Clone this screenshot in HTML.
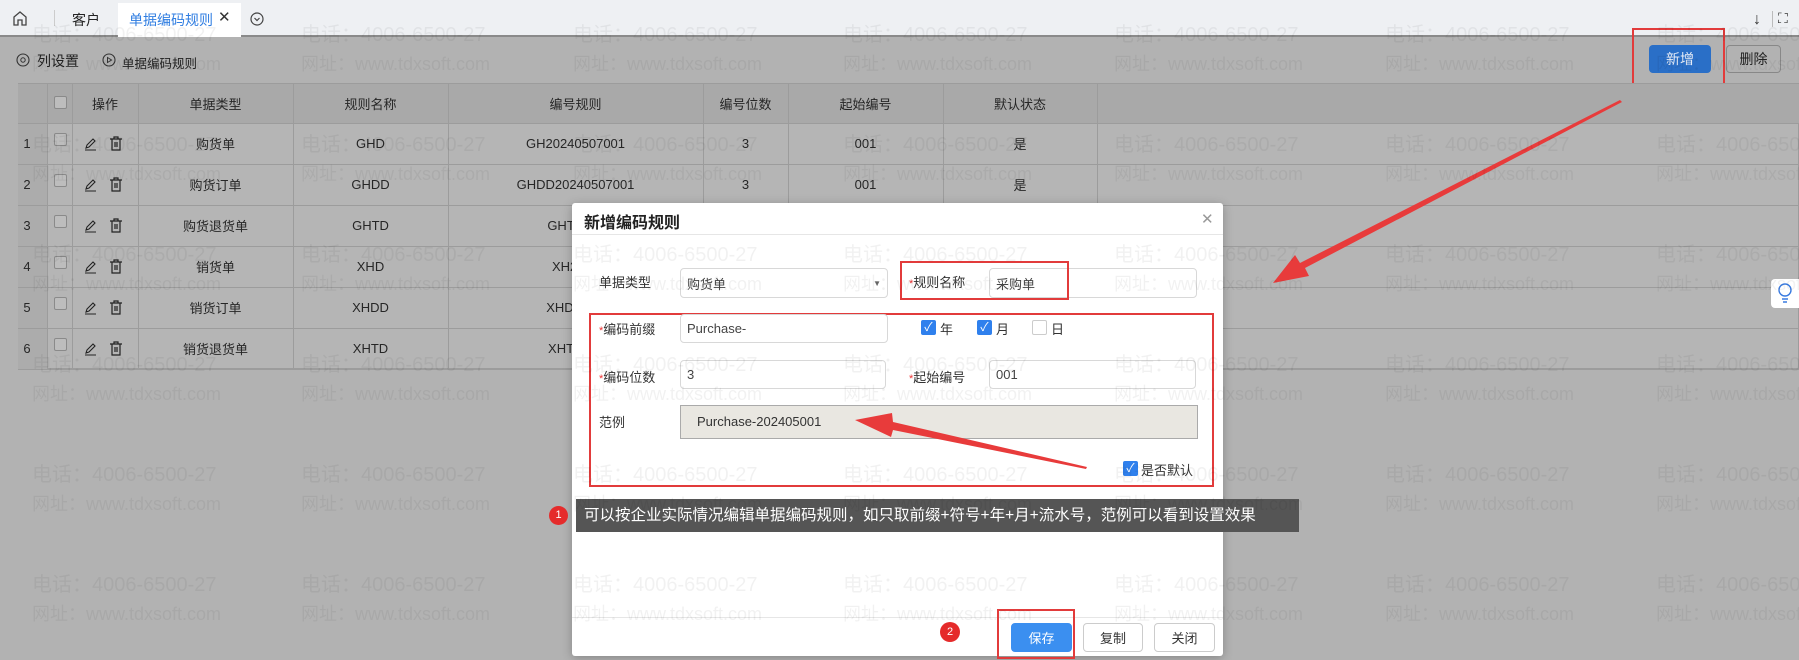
<!DOCTYPE html>
<html><head><meta charset="utf-8"><style>
*{box-sizing:border-box;margin:0;padding:0}
body{width:1799px;height:660px;overflow:hidden;position:relative;background:#b2b2b2;font-family:"Liberation Sans","Noto Sans CJK SC",sans-serif;font-size:13px;color:#222}
.a{position:absolute}
.tabbar{left:0;top:0;width:1799px;height:37px;background:#eef0f3;border-bottom:2px solid #8a8a8a}
.th{background:#a9a9a9}
.cell{position:absolute;display:flex;align-items:center;justify-content:center;font-size:13px;color:#262626}
.vl{position:absolute;width:1px;background:#9c9c9c}
.hl{position:absolute;height:1px;background:#9c9c9c;left:18px;width:1781px}
.cb{position:absolute;width:13px;height:13px;border:1px solid #8a8a8a;border-radius:2px;background:#bdbdbd}
.dlg{left:572px;top:203px;width:651px;height:453px;background:#fff;border-radius:3px;box-shadow:0 2px 10px rgba(0,0,0,.25)}
.lbl{position:absolute;font-size:13px;color:#333}
.req{color:#e33;font-size:11px}
.inp{position:absolute;border:1px solid #d8d8d8;border-radius:4px;background:#fff;font-size:13px;color:#444;padding-left:6px;display:flex;align-items:center}
.rbox{position:absolute;border:2px solid #e23b3b}
.ck{position:absolute;width:15px;height:15px;border-radius:2px;background:#2f80ed;color:#fff;font-size:12px;line-height:15px;text-align:center}
.btn{position:absolute;border:1px solid #ccc;border-radius:4px;background:#fff;display:flex;align-items:center;justify-content:center;font-size:13px;color:#333}
.wm{position:absolute;font-size:20px;color:rgba(0,0,0,.055);white-space:nowrap;z-index:50;pointer-events:none}
</style></head><body>

<div class="a tabbar"></div>
<svg class="a" style="left:12px;top:10px" width="16" height="17" viewBox="0 0 16 17"><path d="M2 7 L8 2 L14 7 V15 H10 V10 H6 V15 H2 Z" fill="none" stroke="#444" stroke-width="1.3"/></svg>
<div class="a" style="left:54px;top:10px;width:1px;height:16px;background:#ccc"></div>
<div class="a" style="left:72px;top:10px;font-size:14px;color:#222">客户</div>
<div class="a" style="left:118px;top:3px;width:123px;height:34px;background:#fff"></div>
<div class="a" style="left:129px;top:10px;font-size:14px;color:#2f7de1">单据编码规则</div>
<div class="a" style="left:218px;top:8px;font-size:15px;color:#333">✕</div>
<svg class="a" style="left:250px;top:12px" width="14" height="14"><circle cx="7" cy="7" r="6" fill="none" stroke="#444" stroke-width="1.2"/><path d="M4.5 6 L7 8.5 L9.5 6" fill="none" stroke="#444" stroke-width="1.2"/></svg>
<div class="a" style="left:1753px;top:11px;font-size:16px;color:#333">↓</div>
<div class="a" style="left:1772px;top:11px;width:1px;height:16px;background:#bbb"></div>
<div class="a" style="left:1778px;top:10px;font-size:14px;color:#333">⛶</div>

<svg class="a" style="left:16px;top:53px" width="14" height="14"><circle cx="7" cy="7" r="6" fill="none" stroke="#333" stroke-width="1.1"/><circle cx="7" cy="7" r="2.2" fill="none" stroke="#333"/></svg>
<div class="a" style="left:37px;top:51px;font-size:14px;color:#222">列设置</div>
<svg class="a" style="left:102px;top:53px" width="14" height="14"><circle cx="7" cy="7" r="6" fill="none" stroke="#333" stroke-width="1.1"/><path d="M5.5 4.5 L9.5 7 L5.5 9.5Z" fill="none" stroke="#333"/></svg>
<div class="a" style="left:122px;top:53px;font-size:12.5px;color:#222">单据编码规则</div>
<div class="a" style="left:1649px;top:45px;width:62px;height:28px;background:#2a6fc7;border-radius:4px;color:#e8eef8;font-size:14px;display:flex;align-items:center;justify-content:center">新增</div>
<div class="a" style="left:1726px;top:45px;width:55px;height:28px;border:1px solid #888;border-radius:4px;color:#222;font-size:14px;display:flex;align-items:center;justify-content:center">删除</div>
<div class="rbox" style="left:1632px;top:28px;width:93px;height:65px"></div>

<div class="a" style="left:18px;top:83px;width:1781px;height:286px;background:#b5b5b5;border:1px solid #9c9c9c"></div>
<div class="a th" style="left:18px;top:83px;width:1781px;height:40px;border-top:1px solid #9c9c9c"></div>
<div class="a" style="left:18px;top:123px;width:29px;height:246px;background:#acacac"></div>
<div class="hl" style="top:123px"></div><div class="hl" style="top:164px"></div><div class="hl" style="top:205px"></div><div class="hl" style="top:246px"></div><div class="hl" style="top:287px"></div><div class="hl" style="top:328px"></div><div class="hl" style="top:369px"></div>
<div class="vl" style="left:47px;top:83px;height:286px"></div>
<div class="vl" style="left:72px;top:83px;height:286px"></div>
<div class="vl" style="left:138px;top:83px;height:286px"></div>
<div class="vl" style="left:293px;top:83px;height:286px"></div>
<div class="vl" style="left:448px;top:83px;height:286px"></div>
<div class="vl" style="left:703px;top:83px;height:286px"></div>
<div class="vl" style="left:788px;top:83px;height:286px"></div>
<div class="vl" style="left:943px;top:83px;height:286px"></div>
<div class="vl" style="left:1097px;top:83px;height:286px"></div>
<div class="cb" style="left:54px;top:96px"></div>
<div class="cell" style="left:72px;top:83px;width:66px;height:40px">操作</div>
<div class="cell" style="left:138px;top:83px;width:155px;height:40px">单据类型</div>
<div class="cell" style="left:293px;top:83px;width:155px;height:40px">规则名称</div>
<div class="cell" style="left:448px;top:83px;width:255px;height:40px">编号规则</div>
<div class="cell" style="left:703px;top:83px;width:85px;height:40px">编号位数</div>
<div class="cell" style="left:788px;top:83px;width:155px;height:40px">起始编号</div>
<div class="cell" style="left:943px;top:83px;width:154px;height:40px">默认状态</div>

<div id="rows"></div>
<script>
var d=[["购货单","GHD","GH20240507001","3","001","是"],["购货订单","GHDD","GHDD20240507001","3","001","是"],["购货退货单","GHTD","GHT2024","","",""],["销货单","XHD","XH2024","","",""],["销货订单","XHDD","XHDD202","","",""],["销货退货单","XHTD","XHT2024","","",""]];
var h="";
for(var i=0;i<6;i++){var t=123+i*41;
h+='<div class="cell" style="left:18px;top:'+t+'px;width:18px;height:41px">'+(i+1)+'</div>';
h+='<div class="cb" style="left:54px;top:'+(t+10)+'px"></div>';
h+='<svg class="a" style="left:84px;top:'+(t+14)+'px" width="14" height="14"><path d="M2 11 L3 8 L9 2 L11 4 L5 10 Z" fill="none" stroke="#222" stroke-width="1.1"/><path d="M1 13 H12" stroke="#222"/></svg>';
h+='<svg class="a" style="left:109px;top:'+(t+13)+'px" width="14" height="16"><path d="M1 3 H13 M5 3 V1 H9 V3 M3 3 V14 H11 V3 M6 6 V11 M8 6 V11" fill="none" stroke="#222" stroke-width="1.2"/></svg>';
var xs=[[138,155],[293,155],[448,255],[703,85],[788,155],[943,154]];
for(var j=0;j<6;j++){h+='<div class="cell" style="left:'+xs[j][0]+'px;top:'+t+'px;width:'+xs[j][1]+'px;height:41px">'+d[i][j]+'</div>';}
}
document.getElementById("rows").innerHTML=h;
</script>

<div class="a" style="left:1771px;top:279px;width:28px;height:29px;background:#fff;border-radius:4px 0 0 4px"></div>
<svg class="a" style="left:1777px;top:283px" width="16" height="20"><circle cx="8" cy="7" r="6" fill="none" stroke="#3a7be0" stroke-width="1.4"/><path d="M5 16 H11 M6 19 H10" stroke="#3a7be0" stroke-width="1.4"/></svg>

<svg class="a" style="left:0;top:0;z-index:40" width="1799" height="660">
<polygon points="1620,100 1622,102 1305,268 1309,276 1273,283 1295,255 1300,263" fill="#e83b3b"/>
<polygon points="1087,467 1086,469 893,430 891,437 855,420 892,413 893,422" fill="#e83b3b"/>
</svg>

<div class="a dlg"></div>
<div class="a" style="left:584px;top:209px;font-size:16px;font-weight:bold;color:#222">新增编码规则</div>
<div class="a" style="left:1201px;top:210px;font-size:15px;color:#999">✕</div>
<div class="a" style="left:572px;top:234px;width:651px;height:1px;background:#e6e6e6"></div>

<div class="lbl" style="left:599px;top:272px">单据类型</div>
<div class="inp" style="left:680px;top:268px;width:208px;height:30px">购货单<span style="position:absolute;right:6px;font-size:8px;color:#666">▼</span></div>
<div class="lbl" style="left:909px;top:272px"><span class="req">*</span>规则名称</div>
<div class="inp" style="left:989px;top:268px;width:208px;height:30px">采购单</div>
<div class="rbox" style="left:900px;top:261px;width:169px;height:39px"></div>

<div class="rbox" style="left:589px;top:313px;width:625px;height:174px"></div>
<div class="lbl" style="left:599px;top:319px"><span class="req">*</span>编码前缀</div>
<div class="inp" style="left:680px;top:314px;width:208px;height:29px">Purchase-</div>
<div class="ck" style="left:921px;top:320px">✓</div><div class="lbl" style="left:940px;top:319px">年</div>
<div class="ck" style="left:977px;top:320px">✓</div><div class="lbl" style="left:996px;top:319px">月</div>
<div class="a" style="left:1032px;top:320px;width:15px;height:15px;border:1px solid #ccc;border-radius:2px"></div><div class="lbl" style="left:1051px;top:319px">日</div>

<div class="lbl" style="left:599px;top:367px"><span class="req">*</span>编码位数</div>
<div class="inp" style="left:680px;top:360px;width:206px;height:29px">3</div>
<div class="lbl" style="left:909px;top:367px"><span class="req">*</span>起始编号</div>
<div class="inp" style="left:989px;top:360px;width:207px;height:29px">001</div>

<div class="lbl" style="left:599px;top:412px">范例</div>
<div class="a" style="left:680px;top:405px;width:518px;height:34px;background:#e9e7e1;border:1px solid #aaa;font-size:13px;color:#333;padding-left:16px;line-height:32px">Purchase-202405001</div>
<div class="ck" style="left:1123px;top:461px">✓</div><div class="lbl" style="left:1141px;top:460px">是否默认</div>

<div class="a" style="left:576px;top:499px;width:723px;height:33px;background:#555;color:#fff;font-size:15.5px;line-height:33px;padding-left:8px;white-space:nowrap;z-index:45">可以按企业实际情况编辑单据编码规则，如只取前缀+符号+年+月+流水号，范例可以看到设置效果</div>
<div class="a" style="left:549px;top:506px;width:19px;height:19px;border-radius:50%;background:#e52b2b;color:#fff;font-size:11px;line-height:19px;text-align:center;z-index:46">1</div>

<div class="a" style="left:572px;top:617px;width:651px;height:1px;background:#e6e6e6"></div>
<div class="a" style="left:940px;top:622px;width:20px;height:20px;border-radius:50%;background:#e52b2b;color:#fff;font-size:11px;line-height:20px;text-align:center">2</div>
<div class="btn" style="left:1011px;top:623px;width:61px;height:29px;background:#3b8ff0;border-color:#3b8ff0;color:#fff">保存</div>
<div class="btn" style="left:1083px;top:623px;width:60px;height:29px">复制</div>
<div class="btn" style="left:1154px;top:623px;width:61px;height:29px">关闭</div>
<div class="rbox" style="left:997px;top:609px;width:78px;height:50px"></div>

<div id="wm"></div>
<script>
var w="",cx=[32,301,573,843,1114,1385,1656];
for(var r=0;r<6;r++){for(var c=0;c<7;c++){var t=18+r*110;
w+='<div class="wm" style="left:'+cx[c]+'px;top:'+t+'px">电话：4006-6500-27</div>';
w+='<div class="wm" style="left:'+cx[c]+'px;top:'+(t+32)+'px;font-size:18px">网址：www.tdxsoft.com</div>';}}
document.getElementById("wm").innerHTML=w;
</script>
</body></html>
